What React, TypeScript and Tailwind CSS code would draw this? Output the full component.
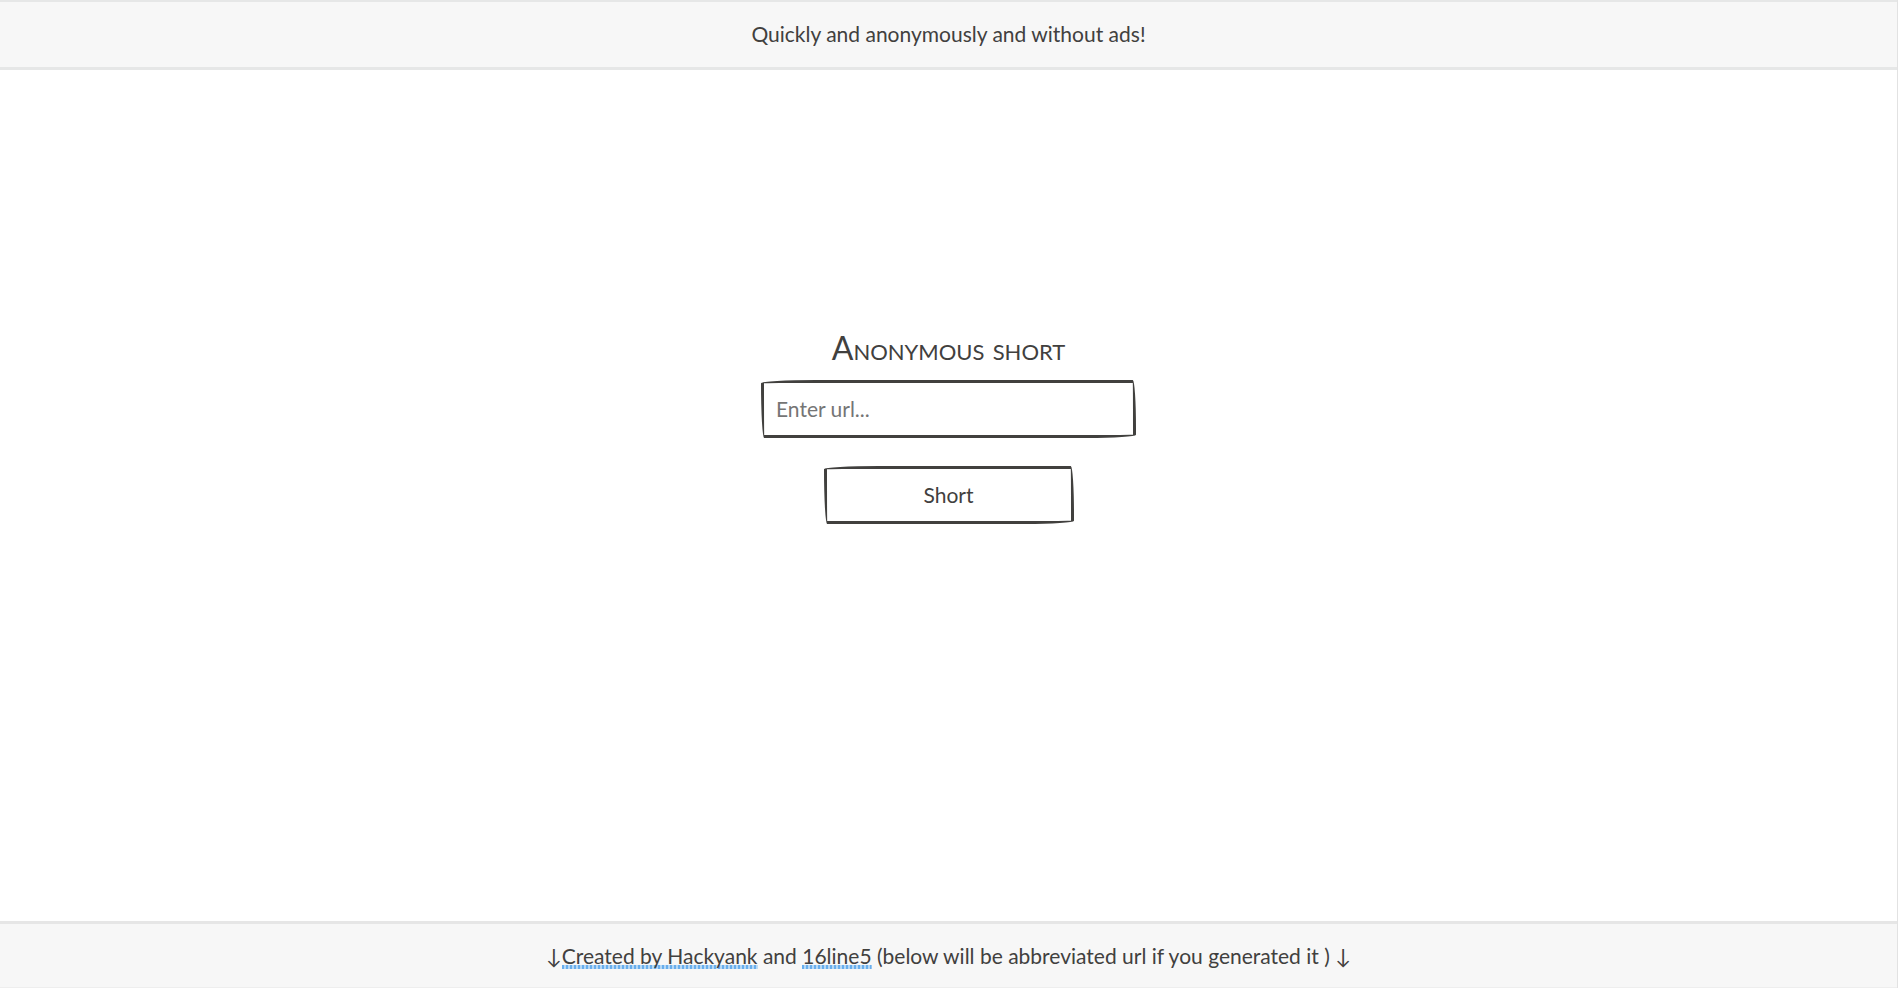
import React from 'react';

const sketchBorder =
  'border-3 border-[#41403e] bg-white rounded-[255px_15px_225px_15px/15px_225px_15px_255px]';

interface AuthorLinkProps {
  href: string;
  children: React.ReactNode;
}

const AuthorLink: React.FC<AuthorLinkProps> = ({ href, children }) => (
  <a
    href={href}
    className="bg-[repeating-linear-gradient(90deg,#69aeec_0px,#69aeec_2px,#b5d8f6_2px,#b5d8f6_4px)] bg-[length:100%_4px] bg-bottom bg-no-repeat pb-px"
  >
    {children}
  </a>
);

const App: React.FC = () => (
  <div className="flex min-h-screen flex-col border-r border-[#e2e2e2] bg-white font-[Lato,sans-serif] text-[21px] leading-8 text-[#41403e]">
    <header className="border-t-2 border-b-3 border-[#e6e7e7] bg-[#f7f7f7] pt-4 pb-[17px] text-center">
      <p>Quickly and anonymously and without ads!</p>
    </header>

    <main className="flex flex-1 flex-col items-center justify-center pb-[140px]">
      <h1 className="text-[32px] leading-10 [font-variant:small-caps]">Anonymous short</h1>
      <form className="mt-3 flex flex-col items-center gap-7" onSubmit={(e) => e.preventDefault()}>
        <input
          type="text"
          aria-label="Enter url..."
          placeholder="Enter url..."
          className={`h-[58px] w-[375px] px-3 outline-none placeholder:text-[#757575] ${sketchBorder}`}
        />
        <button type="submit" className={`h-[58px] w-[250px] ${sketchBorder}`}>
          Short
        </button>
      </form>
    </main>

    <footer className="border-t-3 border-b border-t-[#e6e6e6] border-b-[#eeeeee] bg-[#f7f7f7] pt-4 pb-[15px] text-center">
      <p>
        ↓<AuthorLink href="#hackyank">Created by Hackyank</AuthorLink> and{' '}
        <AuthorLink href="#16line5">16line5</AuthorLink> (below will be abbreviated url if you generated it ) ↓
      </p>
    </footer>
  </div>
);

export default App;
